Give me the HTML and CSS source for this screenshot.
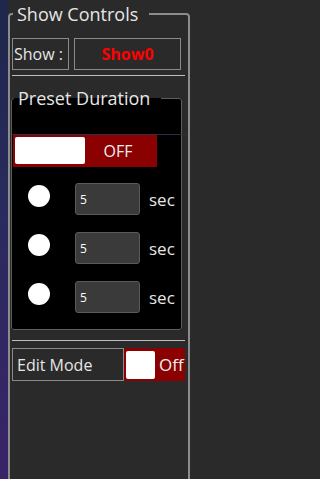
FILE: index.html
```html
<!DOCTYPE html>
<html lang="en">
<head>
<meta charset="utf-8">
<title>Show Controls</title>
<link rel="stylesheet" href="styles.css">
</head>
<body>
<div class="app">
  <div class="strip"></div>
  <div class="main">
    <fieldset class="panel">
      <legend class="panel-title">Show Controls</legend>
      <div class="show-row">
        <div class="show-label">Show :</div>
        <div class="show-value">Show0</div>
      </div>
      <div class="sep"></div>
      <fieldset class="preset">
        <legend class="preset-title">Preset Duration</legend>
        <div class="preset-body">
          <div class="hline"></div>
          <div class="toggle-big">
            <span class="knob-big"></span>
            <span class="toggle-text">OFF</span>
          </div>
          <div class="rows">
            <div class="row">
              <span class="radio"></span>
              <div class="num">5</div>
              <span class="unit">sec</span>
            </div>
            <div class="row">
              <span class="radio"></span>
              <div class="num">5</div>
              <span class="unit">sec</span>
            </div>
            <div class="row">
              <span class="radio"></span>
              <div class="num">5</div>
              <span class="unit">sec</span>
            </div>
          </div>
        </div>
      </fieldset>
      <div class="sep sep-low"></div>
      <div class="edit-row">
        <div class="edit-label">Edit Mode</div>
        <div class="toggle-small">
          <span class="knob-small"></span>
          <span class="toggle-small-text">Off</span>
        </div>
      </div>
    </fieldset>
  </div>
</div>
</body>
</html>
```

FILE: styles.css
```css
html, body {
  margin: 0;
  padding: 0;
  height: 100%;
  overflow: hidden;
  background: #2a2a2a;
}

body {
  font-family: "Open Sans", "Noto Sans", sans-serif;
  color: #e6e6e6;
}

.app {
  display: flex;
  height: 479px;
  overflow: hidden;
}

.strip {
  width: 8px;
  flex: none;
  background: linear-gradient(180deg, #1e2749 0%, #2a2b5e 45%, #3a2468 100%);
}

.main {
  flex: 1;
  height: 479px;
  overflow: hidden;
  background: #2a2a2a;
}

.panel {
  box-sizing: border-box;
  width: 182px;
  height: 483px;
  margin: 2px 0 0 0;
  padding: 0 3px 0 0;
  border: 2px solid #8c8c8c;
  border-radius: 4px;
  min-inline-size: 0;
}

.panel-title {
  font-size: 18px;
  line-height: 24px;
  padding: 0 11px 0 4px;
  margin-left: 3px;
  color: #e6e6e6;
}

.show-row {
  display: flex;
  gap: 5px;
  margin: 12px 0 0 2px;
  height: 32px;
}

.show-label,
.show-value {
  box-sizing: border-box;
  height: 32px;
  border: 1px solid #8a8a8a;
  display: flex;
  align-items: center;
  font-size: 16px;
}

.show-label {
  width: 57px;
  padding-left: 1px;
  color: #e6e6e6;
}

.show-value {
  width: 107px;
  justify-content: center;
  color: #ff0000;
  font-weight: 700;
  font-size: 16px;
}

.sep {
  width: 173px;
  height: 1px;
  background: #bdbdbd;
  margin: 5px 0 0 2px;
}

.sep-low {
  margin-top: 10px;
}

.preset {
  box-sizing: border-box;
  width: 171px;
  margin: 10px 0 0 1px;
  padding: 0;
  border: 1px solid #5e5e5e;
  border-radius: 3px;
  background: #000;
  min-inline-size: 0;
}

.preset-title {
  font-size: 18px;
  line-height: 24px;
  padding: 0 11px 0 4px;
  margin-left: 2px;
  color: #e6e6e6;
}

.preset-body {
  padding-top: 24px;
}

.hline {
  height: 1px;
  background: #2c3142;
  margin-right: -6px;
}

.toggle-big {
  box-sizing: border-box;
  display: flex;
  width: 144px;
  height: 32px;
  margin-left: 1px;
  padding: 2px;
  background: #8b0000;
}

.knob-big {
  width: 70px;
  height: 27px;
  background: #fff;
  border-radius: 2px;
}

.toggle-text {
  flex: 1;
  display: flex;
  align-items: center;
  justify-content: center;
  font-size: 16px;
  color: #f0f0f0;
  padding-right: 4px;
}

.rows {
  display: flex;
  flex-direction: column;
  gap: 17px;
  padding: 16px 0 16px 0;
}

.row {
  display: flex;
  align-items: center;
  height: 32px;
}

.radio {
  width: 22px;
  height: 22px;
  border-radius: 50%;
  background: #fff;
  margin-left: 16px;
  align-self: flex-start;
  margin-top: 2px;
}

.num {
  box-sizing: border-box;
  width: 65px;
  height: 32px;
  margin-left: 25px;
  padding-left: 4px;
  border: 1px solid #5a5a5a;
  border-radius: 3px;
  background: #3a3a3a;
  display: flex;
  align-items: center;
  font-size: 12px;
  color: #fff;
}

.unit {
  margin-left: 9px;
  font-size: 17px;
  color: #e6e6e6;
}

.edit-row {
  display: flex;
  margin: 7px 0 0 2px;
  height: 33px;
}

.edit-label {
  box-sizing: border-box;
  width: 112px;
  height: 33px;
  border: 1px solid #8a8a8a;
  padding-left: 4px;
  display: flex;
  align-items: center;
  font-size: 16px;
  color: #e6e6e6;
}

.toggle-small {
  box-sizing: border-box;
  display: flex;
  width: 61px;
  height: 33px;
  padding: 3px 0 0 2px;
  background: #8b0000;
}

.knob-small {
  width: 29px;
  height: 28px;
  background: #fff;
  border-radius: 2px;
}

.toggle-small-text {
  margin-left: 4px;
  font-size: 17px;
  line-height: 28px;
  color: #f0f0f0;
}
```
